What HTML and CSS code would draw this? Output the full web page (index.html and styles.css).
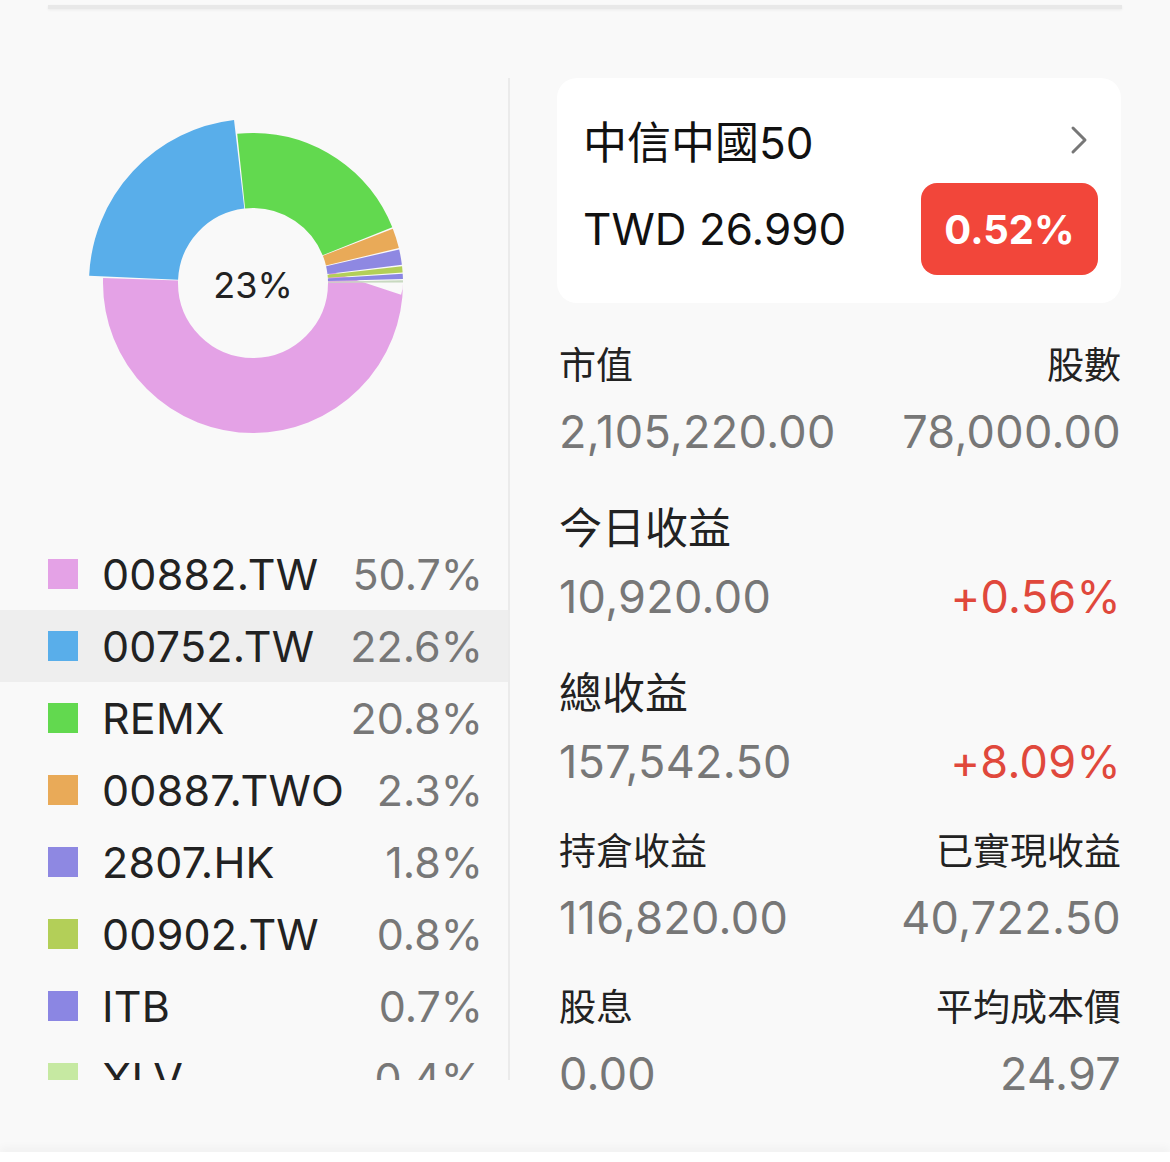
FILE: index.html
```html
<!DOCTYPE html>
<html lang="zh-Hant">
<head>
    <meta charset="UTF-8">
    <meta name="viewport" content="width=device-width, initial-scale=1.0">
    <title>持倉分佈</title>
    <link rel="stylesheet" href="styles.css">
</head>
<body>
    <div class="top-rule"></div>

    <div class="content">
        <div class="allocation">
            <div class="chart">
                <svg class="donut" width="340" height="340" viewBox="-170 -170 340 340">
                    <!-- slices: dash length = share, offset = -(start) -->
                    <circle r="112.5" stroke="#e4a2e6" stroke-width="75" pathLength="100" stroke-dasharray="50.55 49.45" stroke-dashoffset="0"></circle>
                    <circle r="119.5" stroke="#59aeea" stroke-width="89" pathLength="100" stroke-dasharray="22.45 77.55" stroke-dashoffset="-50.7"></circle>
                    <circle r="112.5" stroke="#62d94f" stroke-width="75" pathLength="100" stroke-dasharray="20.65 79.35" stroke-dashoffset="-73.3"></circle>
                    <circle r="112.5" stroke="#e9aa58" stroke-width="75" pathLength="100" stroke-dasharray="2.15 97.85" stroke-dashoffset="-94.1"></circle>
                    <circle r="112.5" stroke="#8e88e2" stroke-width="75" pathLength="100" stroke-dasharray="1.65 98.35" stroke-dashoffset="-96.4"></circle>
                    <circle r="112.5" stroke="#b3cf58" stroke-width="75" pathLength="100" stroke-dasharray="0.65 99.35" stroke-dashoffset="-98.2"></circle>
                    <circle r="112.5" stroke="#8b86e3" stroke-width="75" pathLength="100" stroke-dasharray="0.55 99.45" stroke-dashoffset="-99.0"></circle>
                    <circle r="112.5" stroke="#c8d9c0" stroke-width="75" pathLength="100" stroke-dasharray="0.25 99.75" stroke-dashoffset="-99.7"></circle>
                    <text class="donut-label" x="0" y="2">23%</text>
                </svg>
            </div>

            <ul class="legend">
                <li class="legend-row"><span class="swatch" style="background:#e4a2e6"></span><span class="ticker">00882.TW</span><span class="share">50.7%</span></li>
                <li class="legend-row is-active"><span class="swatch" style="background:#59aeea"></span><span class="ticker">00752.TW</span><span class="share">22.6%</span></li>
                <li class="legend-row"><span class="swatch" style="background:#62d94f"></span><span class="ticker">REMX</span><span class="share">20.8%</span></li>
                <li class="legend-row"><span class="swatch" style="background:#e9aa58"></span><span class="ticker">00887.TWO</span><span class="share">2.3%</span></li>
                <li class="legend-row"><span class="swatch" style="background:#8e88e2"></span><span class="ticker">2807.HK</span><span class="share">1.8%</span></li>
                <li class="legend-row"><span class="swatch" style="background:#b3cf58"></span><span class="ticker">00902.TW</span><span class="share">0.8%</span></li>
                <li class="legend-row"><span class="swatch" style="background:#8b86e3"></span><span class="ticker">ITB</span><span class="share">0.7%</span></li>
                <li class="legend-row"><span class="swatch" style="background:#c6e9a2"></span><span class="ticker">XLV</span><span class="share">0.4%</span></li>
            </ul>
        </div>

        <div class="detail">
            <div class="fund-card">
                <div class="fund-head">
                    <span class="fund-name">中信中國50</span>
                    <svg class="chevron" width="18" height="30" viewBox="0 0 18 30">
                        <polyline points="3,3 15,15 3,27"></polyline>
                    </svg>
                </div>
                <div class="fund-price">
                    <span class="price">TWD 26.990</span>
                    <span class="change-badge">0.52%</span>
                </div>
            </div>

            <div class="stats">
                <div class="stat">
                    <div class="stat-line"><span class="label">市值</span><span class="label">股數</span></div>
                    <div class="stat-line"><span class="value">2,105,220.00</span><span class="value">78,000.00</span></div>
                </div>
                <div class="stat stat-big">
                    <div class="stat-line"><span class="label">今日收益</span></div>
                    <div class="stat-line"><span class="value">10,920.00</span><span class="value up">+0.56%</span></div>
                </div>
                <div class="stat stat-big">
                    <div class="stat-line"><span class="label">總收益</span></div>
                    <div class="stat-line"><span class="value">157,542.50</span><span class="value up">+8.09%</span></div>
                </div>
                <div class="stat">
                    <div class="stat-line"><span class="label">持倉收益</span><span class="label">已實現收益</span></div>
                    <div class="stat-line"><span class="value">116,820.00</span><span class="value">40,722.50</span></div>
                </div>
                <div class="stat">
                    <div class="stat-line"><span class="label">股息</span><span class="label">平均成本價</span></div>
                    <div class="stat-line"><span class="value">0.00</span><span class="value">24.97</span></div>
                </div>
            </div>
        </div>
    </div>

    <div class="bottom-bar"></div>
</body>
</html>
```

FILE: styles.css
```css
body {
    margin: 0;
    height: 1162px;
    overflow: hidden;
    display: flex;
    flex-direction: column;
    background-color: #f9f9f9;
    color: #222;
    font-family: Inter, "Noto Sans CJK TC", sans-serif;
}

.top-rule {
    height: 4px;
    margin: 5px 48px 0;
    background: #e8e8e8;
    box-shadow: 0 1px 3px rgba(0, 0, 0, 0.06);
}

.content {
    display: flex;
    margin-top: 69px;
    height: 1002px;
}

/* left: donut + legend */
.allocation {
    width: 508px;
    flex-shrink: 0;
    height: 1002px;
    overflow: hidden;
    border-right: 2px solid #ebebeb;
}

.chart {
    height: 460px;
    padding: 35px 0 0 83px;
    box-sizing: border-box;
}

.donut {
    display: block;
    overflow: visible;
}

.donut circle {
    fill: none;
}

.donut-label {
    font-size: 36px;
    fill: #222;
    text-anchor: middle;
    dominant-baseline: central;
}

.legend {
    list-style: none;
    margin: 0;
    padding: 0;
}

.legend-row {
    display: flex;
    align-items: center;
    height: 72px;
    padding: 0 25px 0 48px;
}

.legend-row.is-active {
    background: #eeeeee;
}

.swatch {
    width: 30px;
    height: 30px;
    margin-right: 24px;
    flex-shrink: 0;
}

.ticker {
    font-size: 43px;
    letter-spacing: 0.2px;
    color: #222;
}

.share {
    margin-left: auto;
    font-size: 43px;
    color: #777;
}

/* right: fund card + numbers */
.detail {
    flex: 1;
    padding: 0 49px 0 47px;
}

.fund-card {
    display: flex;
    flex-direction: column;
    gap: 8px;
    padding: 27px 23px 28px 26px;
    background: #fff;
    border-radius: 20px;
}

.fund-head,
.fund-price {
    display: flex;
    align-items: center;
    justify-content: space-between;
}

.fund-head {
    height: 70px;
}

.fund-price {
    height: 92px;
}

.fund-name,
.price {
    font-size: 44px;
    color: #111;
}

.chevron {
    margin-right: 10px;
}

.chevron polyline {
    fill: none;
    stroke: #777;
    stroke-width: 3;
    stroke-linecap: round;
    stroke-linejoin: round;
}

.change-badge {
    width: 177px;
    height: 92px;
    display: flex;
    align-items: center;
    justify-content: center;
    background: #f2463a;
    border-radius: 16px;
    color: #fff;
    font-size: 40px;
    font-weight: 700;
}

.stats {
    padding: 37px 0 0 2px;
}

.stat + .stat {
    margin-top: 36px;
}

.stat + .stat-big {
    margin-top: 40px;
}

.stat-line {
    display: flex;
    justify-content: space-between;
}

.stat-line + .stat-line {
    margin-top: 12px;
}

.label {
    font-size: 37px;
    line-height: 52px;
    color: #222;
}

.stat-big .label {
    font-size: 43px;
    line-height: 56px;
}

.stat-big .stat-line + .stat-line {
    margin-top: 13px;
}

.value {
    font-size: 45px;
    line-height: 56px;
    letter-spacing: 0.3px;
    color: #777;
}

.value.up {
    color: #e0483c;
}

.bottom-bar {
    margin-top: auto;
    height: 10px;
    background: #fff;
    box-shadow: 0 -4px 10px rgba(0, 0, 0, 0.04);
}
```
